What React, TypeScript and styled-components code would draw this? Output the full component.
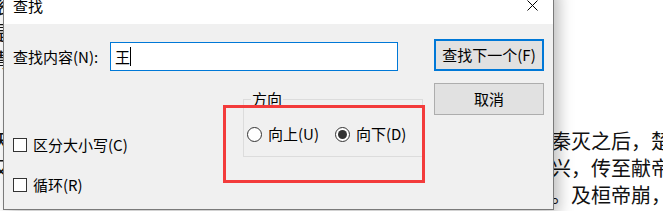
import React from "react";
import styled, { createGlobalStyle } from "styled-components";

const GlobalStyle = createGlobalStyle`
  html, body {
    margin: 0;
    padding: 0;
    background: #fff;
  }
  body {
    font-family: "Noto Sans CJK SC", "Noto Sans", sans-serif;
  }
`;

const Page = styled.div`
  position: relative;
  width: 663px;
  height: 211px;
  overflow: hidden;
  background: #fff;
`;

const Article = styled.div`
  margin: -8px 0 0 -9px;
  font-size: 20px;
  line-height: 27px;
  color: #111;
  white-space: nowrap;
  text-spacing-trim: space-all;
`;

const Line = styled.div`
  height: 27px;
`;

const Dialog = styled.div`
  position: absolute;
  left: 3px;
  top: -14px;
  width: 551px;
  height: 224px;
  box-sizing: border-box;
  border: 1px solid #7a7a7a;
  background: #f0f0f0;
  box-shadow: 5px 4px 14px rgba(0, 0, 0, 0.26);
  display: flex;
  flex-direction: column;
  font-size: 15px;
  line-height: 20px;
  color: #000;
  text-spacing-trim: space-all;
`;

const TitleBar = styled.div`
  height: 37px;
  flex: none;
  display: flex;
  align-items: center;
  padding-left: 9px;
  background: #fff;
`;

const Title = styled.span`
  font-size: 15px;
`;

const CloseButton = styled.div`
  margin-left: auto;
  width: 42px;
  height: 37px;
  display: flex;
  align-items: center;
  justify-content: center;
`;

const Body = styled.div`
  position: relative;
  flex: 1;
  display: flex;
  padding: 15px 9px 0 9px;
`;

const Main = styled.div`
  flex: 1;
  display: flex;
  flex-direction: column;
`;

const FindRow = styled.div`
  margin-top: 3px;
  height: 29px;
  display: flex;
  align-items: center;
`;

const FieldLabel = styled.span`
  width: 97px;
  flex: none;
`;

const TextBox = styled.div`
  width: 288px;
  height: 29px;
  flex: none;
  box-sizing: border-box;
  border: 1px solid #0078d7;
  background: #fff;
  padding-left: 4px;
  display: flex;
  align-items: center;
`;

const Caret = styled.span`
  width: 1px;
  height: 19px;
  background: #000;
`;

const Lower = styled.div`
  display: flex;
`;

const Checks = styled.div`
  width: 230px;
  flex: none;
  padding-top: 64px;
  display: flex;
  flex-direction: column;
  gap: 20px;
`;

const OptionRow = styled.label`
  height: 20px;
  display: flex;
  align-items: center;
  gap: 6px;
  white-space: nowrap;
`;

const CheckBox = styled.span`
  flex: none;
  width: 14px;
  height: 14px;
  box-sizing: border-box;
  border: 1px solid #333;
  background: #fff;
`;

const Group = styled.div`
  position: relative;
  flex: none;
  margin-top: 28px;
  width: 180px;
  height: 58px;
  box-sizing: border-box;
  border: 1px solid #dcdcdc;
  padding: 24px 0 0 3px;
  display: flex;
  align-items: flex-start;
  gap: 16px;
`;

const Legend = styled.span`
  position: absolute;
  left: 7px;
  top: -11px;
  padding: 0 1px;
  background: #f0f0f0;
`;

const RadioCircle = styled.span<{ $checked?: boolean }>`
  flex: none;
  width: 15px;
  height: 15px;
  box-sizing: border-box;
  border: 1px solid #333;
  border-radius: 50%;
  background: #fff;
  display: flex;
  align-items: center;
  justify-content: center;
  &::after {
    content: "";
    display: ${(p) => (p.$checked ? "block" : "none")};
    width: 9px;
    height: 9px;
    border-radius: 50%;
    background: #333;
  }
`;

const Buttons = styled.div`
  width: 110px;
  flex: none;
  display: flex;
  flex-direction: column;
  gap: 12px;
`;

const Button = styled.div<{ $default?: boolean }>`
  height: 32px;
  box-sizing: border-box;
  border: ${(p) => (p.$default ? "2px solid #0078d7" : "1px solid #adadad")};
  background: #e1e1e1;
  display: flex;
  align-items: center;
  justify-content: center;
`;

const Highlight = styled.div`
  position: absolute;
  left: 219px;
  top: 81px;
  width: 202px;
  height: 78px;
  box-sizing: border-box;
  border: 3px solid #f33b3b;
  pointer-events: none;
`;

const lines = [
  "滚滚长江东逝水，浪花淘尽英雄。",
  "是非成败转头空。",
  "青山依旧在，几度夕阳红。",
  "",
  "",
  "天下大势，分久必合，合久必分。周末七国分争，并入于秦。及秦灭之后，楚、汉分争，又并入于汉。",
  "又并入于汉。汉朝自高祖斩白蛇而起义，一统天下，后来光武中兴，传至献帝，遂分为三国。",
  "　推其致乱之由，殆始于桓、灵二帝。桓帝禁锢善类，崇信宦官。及桓帝崩，灵帝即位。",
];

const App: React.FC = () => {
  return (
    <>
      <GlobalStyle />
      <Page>
        <Article>
          {lines.map((text, i) => (
            <Line key={i}>{text}</Line>
          ))}
        </Article>
        <Dialog>
          <TitleBar>
            <Title>查找</Title>
            <CloseButton>
              <svg width="11" height="11" viewBox="0 0 11 11">
                <path d="M0.5 0.5L10.5 10.5M10.5 0.5L0.5 10.5" stroke="#000" strokeWidth="1" />
              </svg>
            </CloseButton>
          </TitleBar>
          <Body>
            <Main>
              <FindRow>
                <FieldLabel>查找内容(N):</FieldLabel>
                <TextBox>
                  <span>王</span>
                  <Caret />
                </TextBox>
              </FindRow>
              <Lower>
                <Checks>
                  <OptionRow>
                    <CheckBox />
                    <span>区分大小写(C)</span>
                  </OptionRow>
                  <OptionRow>
                    <CheckBox />
                    <span>循环(R)</span>
                  </OptionRow>
                </Checks>
                <Group>
                  <Legend>方向</Legend>
                  <OptionRow>
                    <RadioCircle />
                    <span>向上(U)</span>
                  </OptionRow>
                  <OptionRow>
                    <RadioCircle $checked />
                    <span>向下(D)</span>
                  </OptionRow>
                </Group>
              </Lower>
            </Main>
            <Buttons>
              <Button $default>查找下一个(F)</Button>
              <Button>取消</Button>
            </Buttons>
            <Highlight />
          </Body>
        </Dialog>
      </Page>
    </>
  );
};

export default App;
